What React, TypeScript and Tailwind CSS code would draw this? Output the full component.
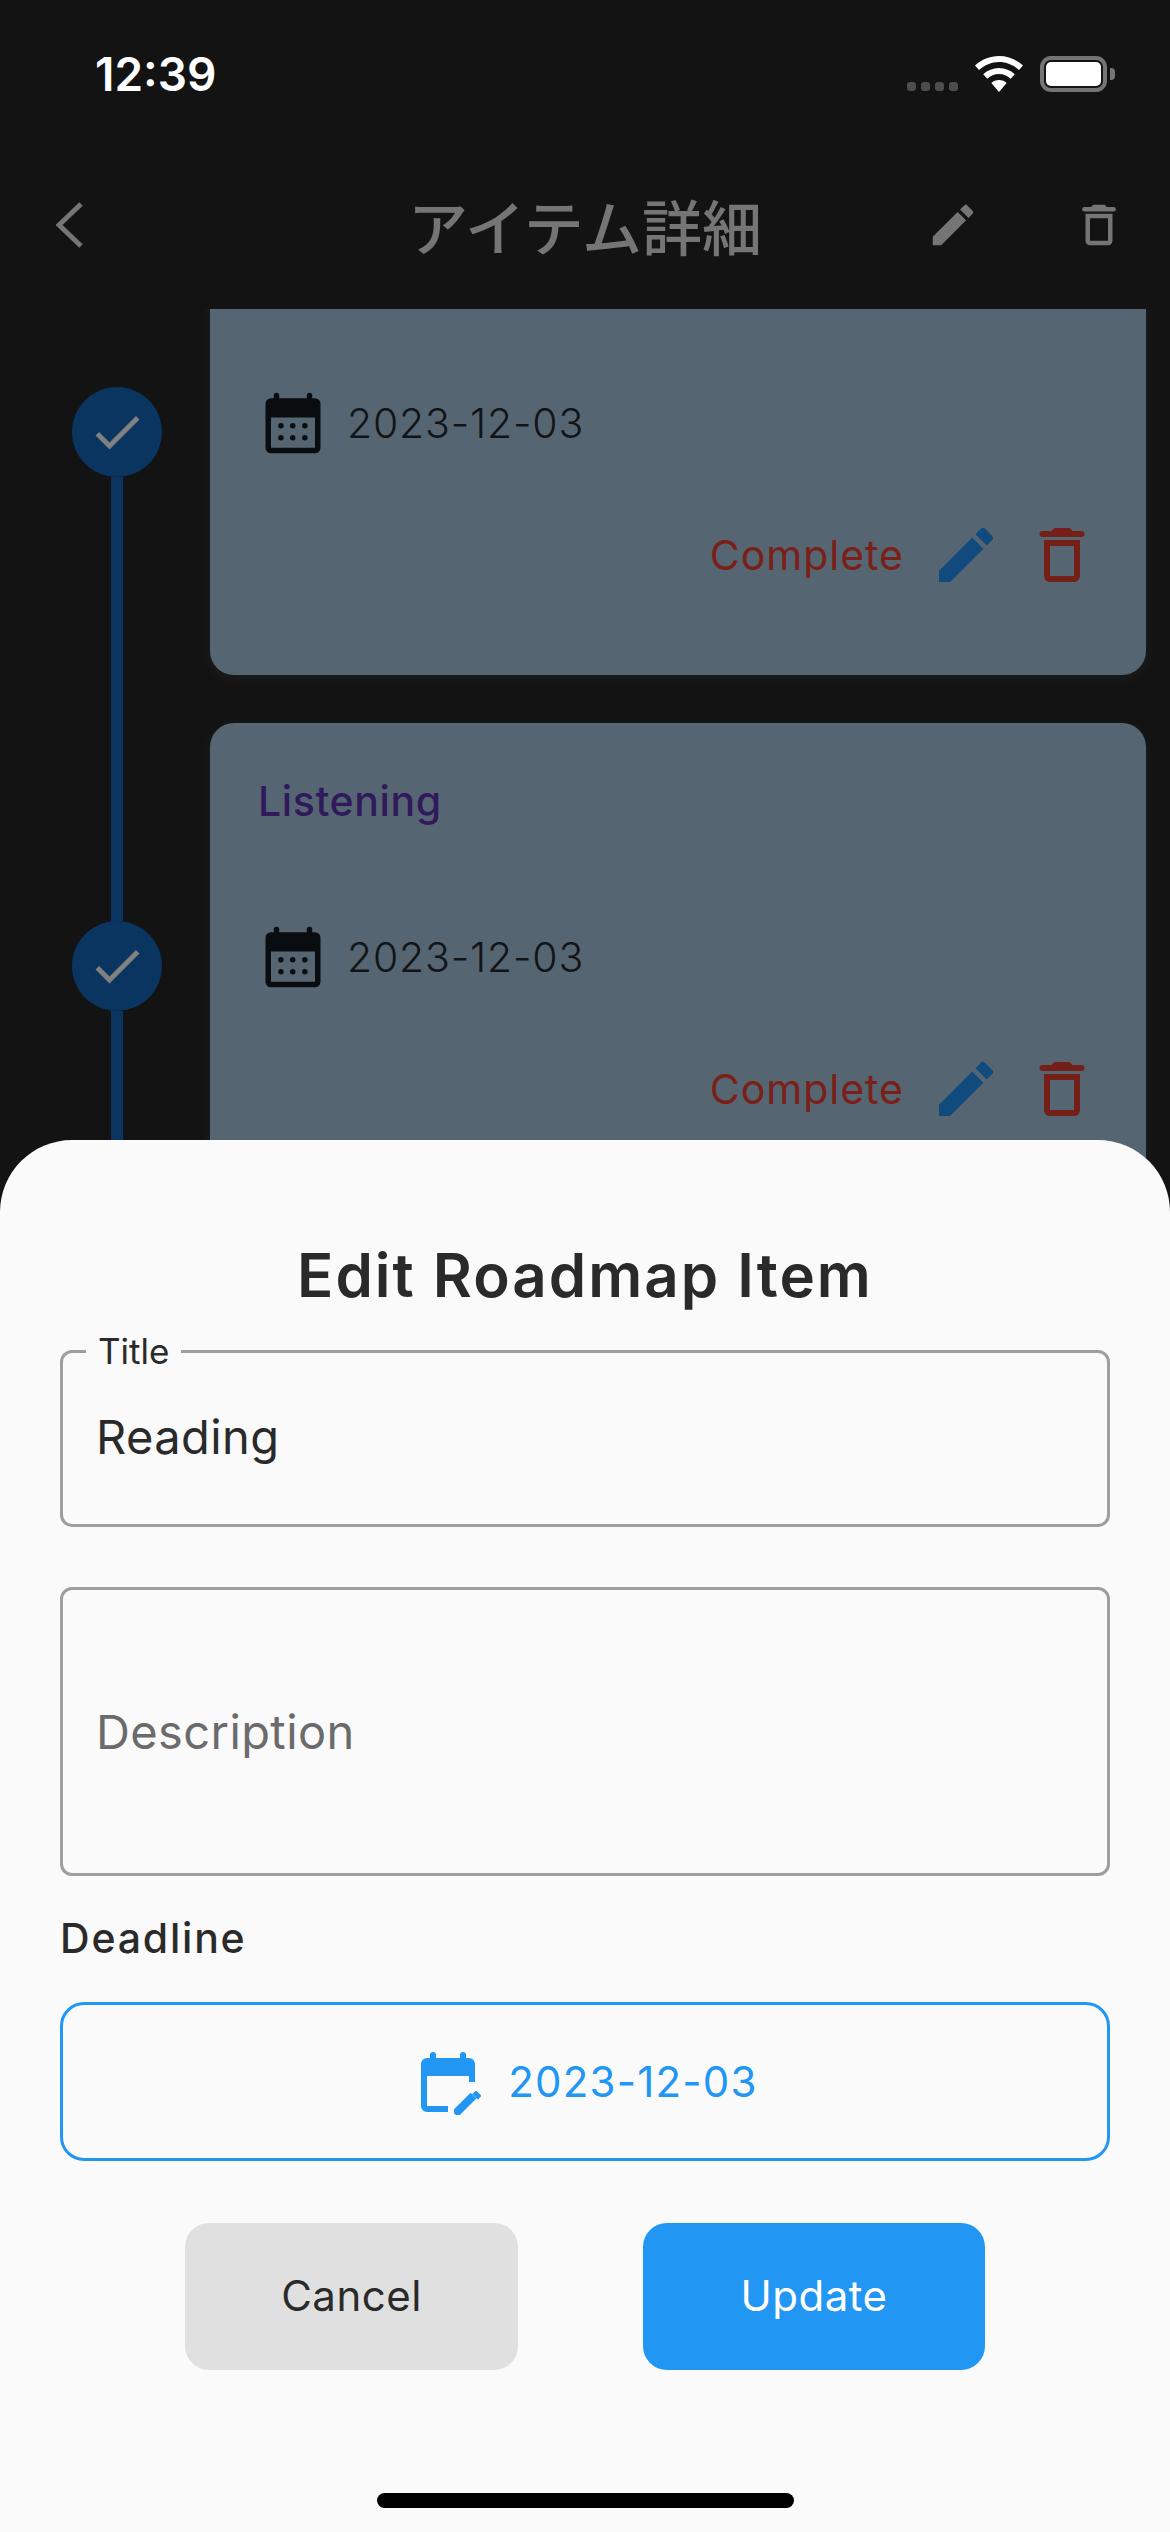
const EDIT_PATH =
  "M3 17.25V21h3.75L17.81 9.94l-3.75-3.75L3 17.25zM20.71 7.04a.996.996 0 0 0 0-1.41l-2.34-2.34a.996.996 0 0 0-1.41 0l-1.83 1.83 3.75 3.75 1.83-1.83z";
const TRASH_PATH =
  "M6 19c0 1.1.9 2 2 2h8c1.1 0 2-.9 2-2V7H6v12zM8 9h8v10H8V9zm7.5-5l-1-1h-5l-1 1H5.5a1 1 0 0 0 0 2h13a1 1 0 0 0 0-2h-3z";

function Glyph({ d, className }: { d: string; className: string }) {
  return (
    <svg viewBox="0 0 24 24" fill="currentColor" fillRule="evenodd" className={className}>
      <path d={d} />
    </svg>
  );
}

function CalendarIcon() {
  return (
    <svg viewBox="0 0 24 24" fill="currentColor" className="w-[66px] h-[66px] shrink-0 text-[#0a0d0f]">
      <path
        fillRule="evenodd"
        d="M20 3h-1V2a1 1 0 0 0-2 0v1H7V2a1 1 0 0 0-2 0v1H4a2 2 0 0 0-2 2v16a2 2 0 0 0 2 2h16a2 2 0 0 0 2-2V5a2 2 0 0 0-2-2zm0 18H4V10h16v11z"
      />
      {[7.6, 11.9, 16.3].map((cx) =>
        [13, 17.4].map((cy) => <circle key={`${cx}-${cy}`} cx={cx} cy={cy} r="1" />)
      )}
    </svg>
  );
}

function EditCalendarIcon() {
  return (
    <svg viewBox="0 0 24 24" fill="currentColor" className="w-[72px] h-[72px] shrink-0 text-[#2196f3]">
      <path d="M5 10h14v2h2V6a2 2 0 0 0-2-2h-1V3a1 1 0 0 0-2 0v1H8V3a1 1 0 0 0-2 0v1H5a2 2 0 0 0-2 2v14a2 2 0 0 0 2 2h7v-2H5V10z" />
      <path d="M22.84 16.28l-1.12-1.12c-.21-.21-.55-.21-.76 0l-.88.88 1.88 1.88.88-.88c.21-.21.21-.55 0-.76zM14 21.06V22a1 1 0 0 0 1 1h.94l5.5-5.5-1.88-1.88z" />
    </svg>
  );
}

function WifiIcon() {
  return (
    <svg viewBox="0 0 48 36" fill="white" className="w-[48px] h-[36px]">
      <path d="M24 0c9 0 17.400 3.500 24 9.500l-4 4.500C38.500 9 31.500 6 24 6S9.500 9 4 14L0 9.500C6.600 3.500 15 0 24 0z" />
      <path d="M24 12c6 0 11.500 2.300 15.800 6.200l-4.100 4.500C32.500 19.800 28.400 18 24 18s-8.500 1.800-11.700 4.700l-4.100-4.500C12.500 14.300 18 12 24 12z" />
      <path d="M24 24c3 0 5.700 1.100 7.700 3L24 36l-7.700-9c2-1.900 4.700-3 7.700-3z" />
    </svg>
  );
}

function StatusBar() {
  return (
    <div className="mt-[44px] h-[60px] pl-[95px] pr-[55px] flex items-center justify-between">
      <span className="font-['Inter',sans-serif] font-semibold text-[46px] leading-[60px] text-white">12:39</span>
      <div className="flex items-end gap-[17px]">
        <div className="flex gap-[5px] mb-[1px]">
          {[0, 1, 2, 3].map((i) => (
            <span key={i} className="w-[9px] h-[9px] rounded-[3px] bg-[#4d4d4d]" />
          ))}
        </div>
        <WifiIcon />
        <div className="flex items-center gap-[3px]">
          <div className="w-[67px] h-[36px] rounded-[11px] border-[4px] border-[#757575] p-[2px]">
            <div className="w-full h-full rounded-[5px] bg-white" />
          </div>
          <span className="w-[5px] h-[12px] rounded-r-[4px] bg-[#757575]" />
        </div>
      </div>
    </div>
  );
}

function NavBar() {
  return (
    <div className="mt-[91px] h-[60px] grid grid-cols-[1fr_auto_1fr] items-center">
      <div className="pl-[56px]">
        <svg viewBox="0 0 27 46" fill="none" stroke="#757575" strokeWidth="5" className="w-[27px] h-[46px]">
          <path d="M25 2 L3 23 L25 44" />
        </svg>
      </div>
      <h1 className="font-['Noto_Sans_CJK_JP',sans-serif] font-medium text-[60px] leading-[60px] text-[#757575]">
        アイテム詳細
      </h1>
      <div className="flex justify-end gap-[92px] pr-[44px] text-[#757575]">
        <Glyph d={EDIT_PATH} className="w-[54px] h-[54px]" />
        <Glyph d={TRASH_PATH} className="w-[54px] h-[54px]" />
      </div>
    </div>
  );
}

function RoadmapRow({ title, first }: { title?: string; first?: boolean }) {
  return (
    <div className="flex pl-[72px]">
      {/* Timeline */}
      <div className="w-[90px] mr-[48px] flex flex-col items-center shrink-0">
        <div className={first ? "w-[12px] h-[198px]" : "w-[12px] h-[198px] bg-[#0a3560]"} />
        <div className="w-[90px] h-[90px] rounded-full bg-[#0a3560] flex items-center justify-center">
          <svg viewBox="0 0 24 24" fill="#808080" className="w-[60px] h-[60px]">
            <path d="M9 16.17L4.83 12l-1.41 1.41L9 19 21 7l-1.41-1.41z" />
          </svg>
        </div>
        <div className="w-[12px] flex-1 bg-[#0a3560]" />
      </div>

      {/* Card */}
      <div className="w-[936px] h-[486px] mb-[48px] rounded-[24px] bg-[#566572] shadow-[0_3px_14px_rgba(255,255,255,0.05)] pt-[48px] pl-[50px] pr-[48px]">
        <div className="-ml-[2px] h-[60px] font-['Inter',sans-serif] font-medium text-[41px] leading-[60px] tracking-[0.6px] text-[#301a5c]">
          {title}
        </div>
        <div className="mt-[93px] flex items-center">
          <CalendarIcon />
          <span className="ml-[21px] font-['Inter',sans-serif] font-light text-[41px] leading-[66px] tracking-[0.8px] text-[#121416]">
            2023-12-03
          </span>
        </div>
        <div className="mt-[63px] flex items-center justify-end">
          <span className="mr-[26px] font-['Inter',sans-serif] text-[41px] leading-[72px] tracking-[1px] text-[#7a2018]">
            Complete
          </span>
          <Glyph d={EDIT_PATH} className="w-[72px] h-[72px] text-[#114b7e]" />
          <Glyph d={TRASH_PATH} className="ml-[24px] w-[72px] h-[72px] text-[#741f18]" />
        </div>
      </div>
    </div>
  );
}

function EditSheet() {
  return (
    <div className="absolute left-0 right-0 bottom-0 h-[1392px] rounded-t-[72px] bg-[#fafafa] px-[60px] flex flex-col font-['Inter',sans-serif]">
      <h2 className="mt-[93px] text-center font-semibold text-[60px] leading-[84px] tracking-[2px] text-[#2a2a2a]">
        Edit Roadmap Item
      </h2>

      <div className="relative mt-[33px] h-[177px] rounded-[12px] border-[3px] border-[#9e9e9e] pl-[33px] pb-[4px] flex items-center">
        <span className="absolute left-[23px] top-[-24px] bg-[#fafafa] px-[12px] text-[35px] leading-[44px] text-[#2a2a2a]">
          Title
        </span>
        <span className="text-[47px] leading-[60px] tracking-[0.4px] text-[#2a2a2a]">Reading</span>
      </div>

      <div className="mt-[60px] h-[289px] rounded-[12px] border-[3px] border-[#9e9e9e] pl-[33px] flex items-center">
        <span className="text-[47px] leading-[60px] tracking-[0.4px] text-[#6b6b6b]">Description</span>
      </div>

      <div className="mt-[32px] font-medium text-[41px] leading-[60px] tracking-[1.8px] text-[#2a2a2a]">Deadline</div>

      <div className="mt-[34px] h-[159px] rounded-[24px] border-[3px] border-[#2196f3] flex items-center justify-center">
        <EditCalendarIcon />
        <span className="ml-[24px] text-[42px] leading-[60px] tracking-[1.2px] text-[#2196f3]">2023-12-03</span>
      </div>

      <div className="mt-[62px] flex justify-center gap-[125px]">
        <button className="w-[333px] h-[147px] pb-[2px] rounded-[24px] bg-[#e0e0e0] text-[42px] tracking-[0.5px] text-[#2a2a2a]">
          Cancel
        </button>
        <button className="w-[342px] h-[147px] pb-[2px] rounded-[24px] bg-[#2196f3] text-[42px] tracking-[0.5px] text-white">
          Update
        </button>
      </div>

      <div className="mt-[123px] mx-auto w-[417px] h-[15px] rounded-full bg-black" />
    </div>
  );
}

export default function App() {
  return (
    <div className="relative w-[1170px] h-[2532px] overflow-hidden bg-[#131313]">
      <header className="h-[309px] flex flex-col">
        <StatusBar />
        <NavBar />
      </header>
      <div className="h-[2223px] overflow-hidden">
        <div className="-mt-[120px]">
          <RoadmapRow first />
          <RoadmapRow title="Listening" />
        </div>
      </div>
      <EditSheet />
    </div>
  );
}
